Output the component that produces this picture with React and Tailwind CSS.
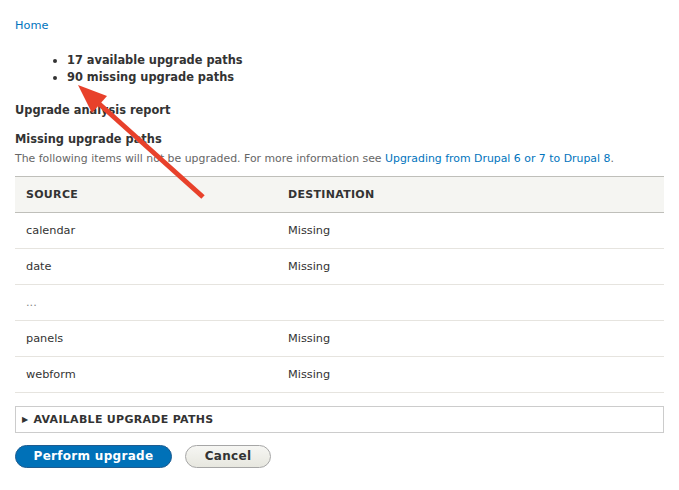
import React from "react";

const rows = [
  { source: "calendar", dest: "Missing" },
  { source: "date", dest: "Missing" },
  { source: "...", dest: "" },
  { source: "panels", dest: "Missing" },
  { source: "webform", dest: "Missing" },
];

export default function App() {
  return (
    <div className="relative min-h-[490px] bg-white px-[15px] pt-[17px] text-[11.3px] leading-[17px] text-[#333] font-['DejaVu_Sans',sans-serif]">
      <a href="#" className="text-[#0074bd]">Home</a>

      <ul className="mt-[18px] list-disc pl-[52px] font-bold text-[11.4px]">
        <li>17 available upgrade paths</li>
        <li>90 missing upgrade paths</li>
      </ul>

      <h2 className="mt-[16px] font-bold text-[11.4px]">Upgrade analysis report</h2>

      <h3 className="mt-[12px] font-bold text-[11.4px]">Missing upgrade paths</h3>
      <p className="mt-[2px] text-[#666] text-[10.9px]">
        The following items will not be upgraded. For more information see{" "}
        <a href="#" className="text-[#0074bd]">Upgrading from Drupal 6 or 7 to Drupal 8</a>.
      </p>

      <table className="mt-[9px] w-full border-collapse text-left">
        <thead>
          <tr className="h-[36px] bg-[#f5f5f2] border-y border-[#bfbfba]">
            <th className="w-[262px] pl-[11px] font-bold uppercase tracking-[0.3px] text-[11px]">Source</th>
            <th className="pl-[11px] font-bold uppercase tracking-[0.3px] text-[11px]">Destination</th>
          </tr>
        </thead>
        <tbody>
          {rows.map((r, i) => (
            <tr key={i} className="h-[36px] border-b border-[#e6e4df]">
              <td className={`pl-[11px] ${r.source === "..." ? "text-[#888]" : ""}`}>{r.source}</td>
              <td className="pl-[11px]">{r.dest}</td>
            </tr>
          ))}
        </tbody>
      </table>

      <div className="mt-[13px] flex h-[27px] items-center border border-[#ccc] pl-[6px] font-bold uppercase text-[11px] tracking-[0.3px]">
        <span className="mr-[5px] text-[8px]">▶</span>
        Available upgrade paths
      </div>

      <div className="mt-[12px] flex gap-[13px]">
        <button className="h-[23px] w-[157px] rounded-full border border-[#1e5c90] bg-[#0071b8] font-bold text-white text-[12px] tracking-[0.3px]">
          Perform upgrade
        </button>
        <button className="h-[23px] w-[86px] rounded-full border border-[#a6a6a6] bg-gradient-to-b from-[#f6f6f3] to-[#e7e7df] font-bold text-[#333] text-[12px] tracking-[0.3px]">
          Cancel
        </button>
      </div>

      <svg className="pointer-events-none absolute left-0 top-0" width="679" height="490">
        <line x1="203" y1="197" x2="96" y2="101" stroke="#e8412b" strokeWidth="5" strokeLinecap="butt" />
        <polygon points="78,85 92,113 107,96" fill="#e8412b" />
      </svg>
    </div>
  );
}
